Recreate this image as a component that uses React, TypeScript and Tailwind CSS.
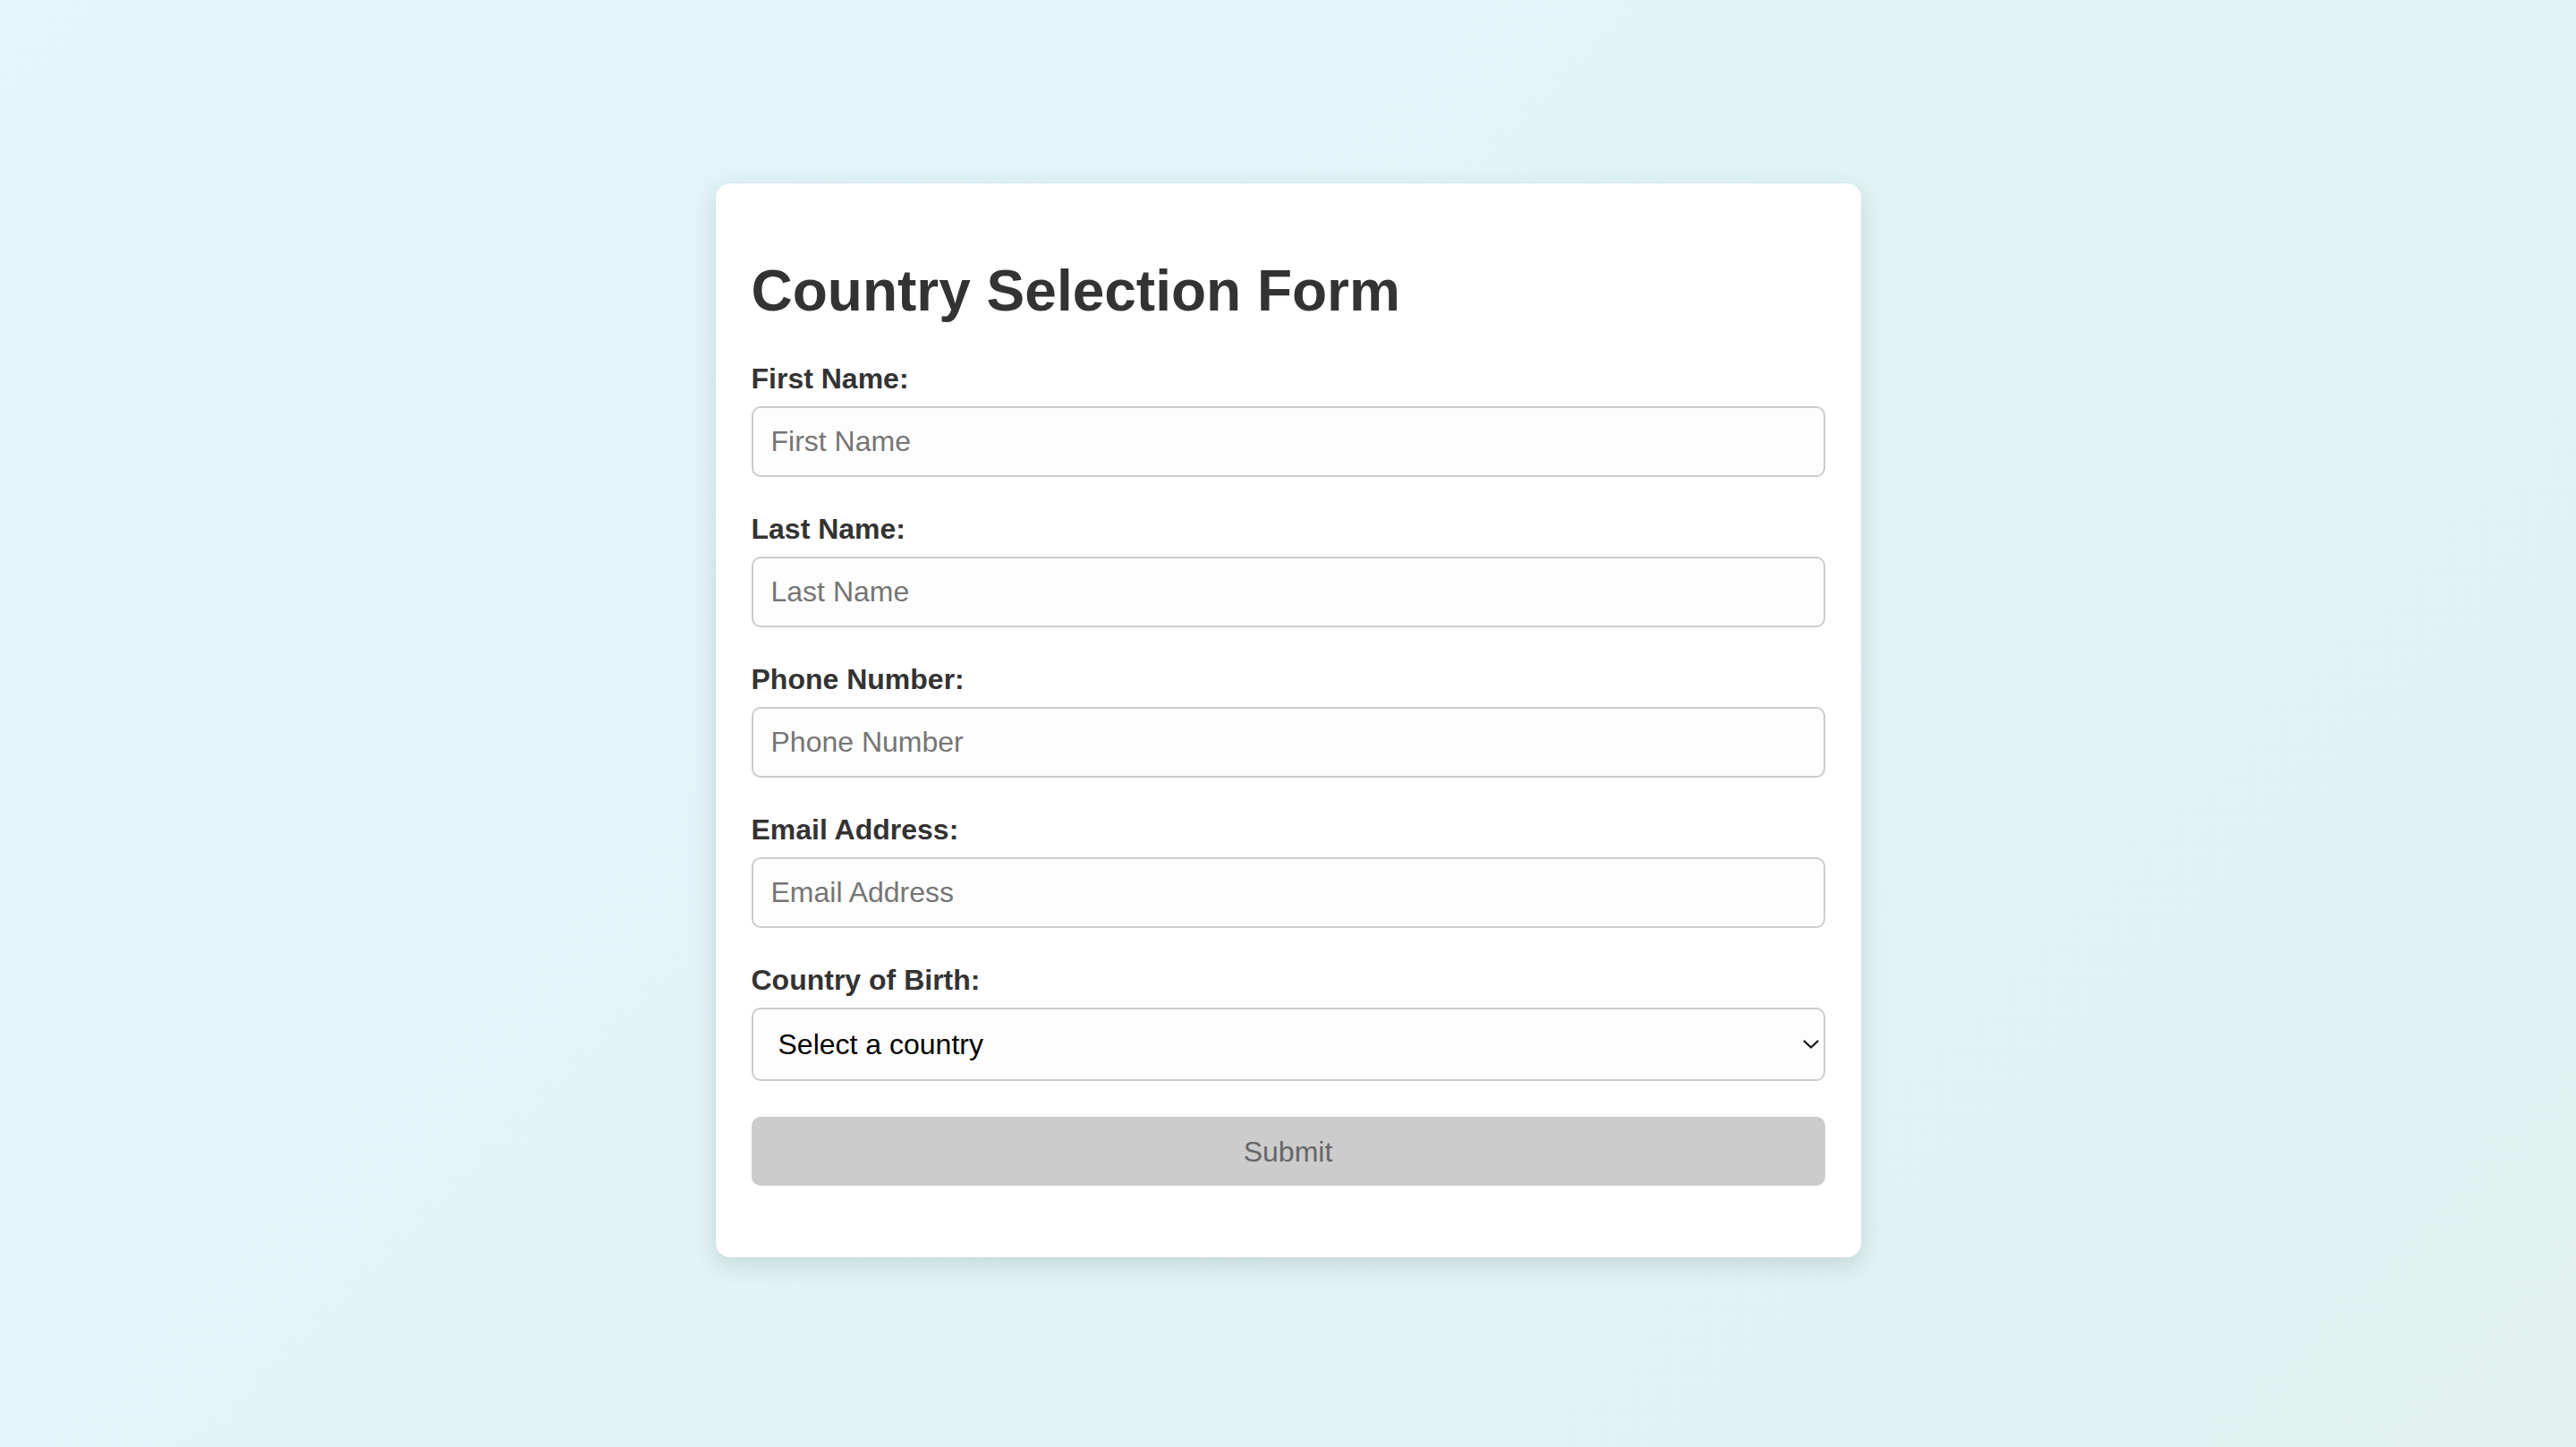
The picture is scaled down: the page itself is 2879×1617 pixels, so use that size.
import { useState } from "react";

const fields = [
    { id: "firstName", label: "First Name:", placeholder: "First Name", type: "text" },
    { id: "lastName", label: "Last Name:", placeholder: "Last Name", type: "text" },
    { id: "phone", label: "Phone Number:", placeholder: "Phone Number", type: "tel" },
    { id: "email", label: "Email Address:", placeholder: "Email Address", type: "email" },
];

const countries = ["United States", "Canada", "United Kingdom", "Germany", "France", "India", "Japan", "Australia"];

export default function App() {
    const [country, setCountry] = useState("");

    return (
        <div className="min-h-screen w-full flex items-center justify-center pb-[7px] bg-[linear-gradient(135deg,#e2f6fb_0%,#e0f1f0_100%)] font-['Liberation_Sans',Arial,sans-serif]">
            <div className="w-[1280px] bg-white rounded-[16px] p-[40px] shadow-[0_8px_26px_rgba(40,70,75,0.16)]">
                <h1 className="mt-[43px] mb-[43px] text-[64px] leading-[74px] font-bold text-[#333]">
                    Country Selection Form
                </h1>

                <form onSubmit={(e) => e.preventDefault()}>
                    {fields.map((f) => (
                        <div key={f.id} className="mb-[40px]">
                            <label htmlFor={f.id} className="block mb-[12px] text-[32px] leading-[37px] font-bold text-[#333]">
                                {f.label}
                            </label>
                            <input
                                id={f.id}
                                type={f.type}
                                placeholder={f.placeholder}
                                className="block w-full h-[79px] px-[20px] text-[32px] text-[#333] bg-[#fdfdfd] border-2 border-[#cccccc] rounded-[10px] outline-none placeholder:text-[#757575]"
                            />
                        </div>
                    ))}

                    <div className="mb-[40px]">
                        <label htmlFor="country" className="block mb-[12px] text-[32px] leading-[37px] font-bold text-[#333]">
                            Country of Birth:
                        </label>
                        <div className="relative">
                            <select
                                id="country"
                                value={country}
                                onChange={(e) => setCountry(e.target.value)}
                                className="block w-full h-[82px] pl-[28px] pr-[50px] text-[32px] text-black bg-[#fdfdfd] border-2 border-[#cccccc] rounded-[10px] outline-none appearance-none"
                            >
                                <option value="">Select a country</option>
                                {countries.map((c) => (
                                    <option key={c} value={c}>
                                        {c}
                                    </option>
                                ))}
                            </select>
                            {/* native-looking chevron */}
                            <svg
                                className="absolute right-[6px] top-1/2 -translate-y-1/2 pointer-events-none"
                                width="20"
                                height="12"
                                viewBox="0 0 20 12"
                                fill="none"
                            >
                                <polyline points="2.5,2.5 10,9.5 17.5,2.5" stroke="#111" strokeWidth="2.2" strokeLinecap="round" strokeLinejoin="round" />
                            </svg>
                        </div>
                    </div>

                    <button
                        type="submit"
                        disabled={!country}
                        className="block w-full h-[77px] mb-[40px] rounded-[10px] bg-[#cccccc] text-[32px] text-[#666]"
                    >
                        Submit
                    </button>
                </form>
            </div>
        </div>
    );
}
